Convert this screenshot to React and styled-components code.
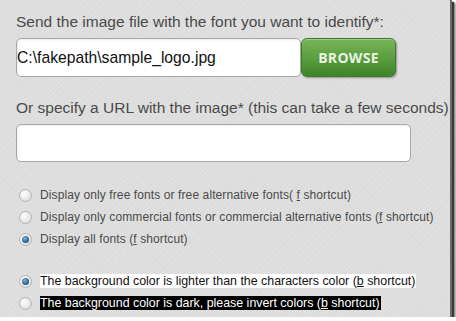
import React from 'react'
import styled, { createGlobalStyle } from 'styled-components'

const GlobalStyle = createGlobalStyle`
  html, body {
    margin: 0;
    padding: 0;
    background: #ffffff;
  }
`

const Frame = styled.div`
  width: 452px;
  height: 317px;
  box-sizing: border-box;
  padding: 12px 0 0 16px;
  overflow: hidden;
  background-color: #dedede;
  background-image:
    repeating-linear-gradient(45deg, rgba(255,255,255,0.08) 0 1px, transparent 1px 3px),
    repeating-linear-gradient(-45deg, rgba(0,0,0,0.02) 0 1px, transparent 1px 4px);
  border-right: 2px solid #6a6a6a;
  box-shadow: 2px 2px 1px #3a3a3a, 4px 3px 2px #9a9a9a;
  font-family: "Liberation Sans", Arial, sans-serif;
`

const Label = styled.div`
  font-size: 15.5px;
  line-height: 20px;
  color: #4a4a4a;
  white-space: nowrap;
  margin-top: ${p => p.$top || 0}px;
`

const Row = styled.div`
  display: flex;
  align-items: center;
  margin-top: 6px;
`

const TextBox = styled.div`
  box-sizing: border-box;
  width: ${p => p.$width}px;
  height: ${p => p.$height}px;
  background: #fff;
  border: 1px solid #a8a8a8;
  border-radius: 5px;
  box-shadow: inset 1px 1px 2px rgba(0,0,0,0.08);
  display: flex;
  align-items: center;
  font-size: 15.7px;
  color: #111;
  white-space: nowrap;
`

const BrowseButton = styled.div`
  box-sizing: border-box;
  width: 95px;
  height: 39px;
  margin-top: -1px;
  border-radius: 6px;
  border: 1px solid #3d7a2c;
  background: linear-gradient(#79b55a, #5c9e40 50%, #3f8429);
  box-shadow: 1px 1px 2px rgba(0,0,0,0.35), inset 0 1px 0 rgba(255,255,255,0.3);
  display: flex;
  align-items: center;
  justify-content: center;
  color: #e9f3e3;
  font-family: "Open Sans", "DejaVu Sans", sans-serif;
  font-weight: 700;
  font-size: 14px;
  letter-spacing: 0.3px;
`

const RadioGroup = styled.div`
  display: flex;
  flex-direction: column;
  margin-top: ${p => p.$top}px;
  padding-left: 3px;
`

const RadioRow = styled.div`
  display: flex;
  align-items: center;
  height: ${p => p.$h}px;
`

const Radio = styled.span`
  box-sizing: border-box;
  width: 13px;
  height: 13px;
  border-radius: 50%;
  border: 1px solid #b4b4b4;
  background: radial-gradient(circle at 35% 35%, #ffffff, #e2e2e2 70%, #cfcfcf);
  display: flex;
  align-items: center;
  justify-content: center;
  flex-shrink: 0;
  margin-right: 8px;

  &::after {
    content: '';
    display: ${p => (p.$checked ? 'block' : 'none')};
    width: 7px;
    height: 7px;
    border-radius: 50%;
    background: radial-gradient(circle at 40% 35%, #7fb3dc, #2a6594 60%, #1b4466);
  }
`

const RadioText = styled.span`
  font-family: "Liberation Sans", Arial, sans-serif;
  font-size: ${p => p.$size}px;
  line-height: 14px;
  letter-spacing: ${p => p.$spacing || 0}px;
  white-space: nowrap;
  padding-right: 1px;
  color: ${p => (p.$dark ? '#ffffff' : p.$plain ? '#4a4a4a' : '#111')};
  background: ${p => (p.$dark ? '#000' : p.$plain ? 'transparent' : '#fff')};
`

const U = styled.span`
  text-decoration: underline;
`

export default function App() {
  return (
    <>
      <GlobalStyle />
      <Frame>
        <Label>Send the image file with the font you want to identify*:</Label>
        <Row>
          <TextBox $width={285} $height={39}>C:\fakepath\sample_logo.jpg</TextBox>
          <BrowseButton>BROWSE</BrowseButton>
        </Row>
        <Label $top={21}>Or specify a URL with the image* (this can take a few seconds):</Label>
        <Row>
          <TextBox $width={395} $height={38} />
        </Row>
        <RadioGroup $top={22}>
          <RadioRow $h={22}>
            <Radio />
            <RadioText $size={12} $spacing={0.1} $plain>Display only free fonts or free alternative fonts( <U>f</U> shortcut)</RadioText>
          </RadioRow>
          <RadioRow $h={22}>
            <Radio />
            <RadioText $size={12} $spacing={0.1} $plain>Display only commercial fonts or commercial alternative fonts (<U>f</U> shortcut)</RadioText>
          </RadioRow>
          <RadioRow $h={22}>
            <Radio $checked />
            <RadioText $size={12} $spacing={0.1} $plain>Display all fonts (<U>f</U> shortcut)</RadioText>
          </RadioRow>
        </RadioGroup>
        <RadioGroup $top={20}>
          <RadioRow $h={22}>
            <Radio $checked />
            <RadioText $size={12.4}>The background color is lighter than the characters color (<U>b</U> shortcut)</RadioText>
          </RadioRow>
          <RadioRow $h={22}>
            <Radio />
            <RadioText $size={12.4} $dark>The background color is dark, please invert colors (<U>b</U> shortcut)</RadioText>
          </RadioRow>
        </RadioGroup>
      </Frame>
    </>
  )
}
